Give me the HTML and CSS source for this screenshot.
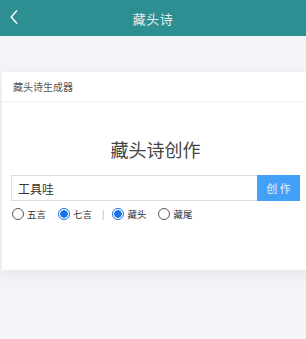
FILE: index.html
```html
<!DOCTYPE html>
<html lang="zh">
<head>
<meta charset="utf-8">
<link rel="stylesheet" href="styles.css">
</head>
<body>
<header class="topbar">
  <svg class="back" width="10" height="16" viewBox="0 0 10 16"><path d="M8 1.5 L2.2 8 L8 14.5" fill="none" stroke="#fff" stroke-width="1.4"/></svg>
  <h1 class="title">藏头诗</h1>
</header>
<main class="page">
  <section class="card">
    <div class="card-head">藏头诗生成器</div>
    <div class="card-body">
      <h2 class="heading">藏头诗创作</h2>
      <div class="form-row">
        <input class="field" type="text" value="工具哇">
        <button class="btn">创 作</button>
      </div>
      <div class="options">
        <label class="opt"><span class="radio"></span>五言</label>
        <label class="opt"><span class="radio on"></span>七言</label>
        <span class="sep">|</span>
        <label class="opt"><span class="radio on"></span>藏头</label>
        <label class="opt"><span class="radio"></span>藏尾</label>
      </div>
    </div>
  </section>
</main>
</body>
</html>
```

FILE: styles.css
```css
* { box-sizing: border-box; }
html, body { margin: 0; padding: 0; }
body {
  width: 306px;
  height: 339px;
  overflow: hidden;
  background: #f3f4f8;
  font-family: "Noto Sans CJK SC", "Noto Sans", sans-serif;
}
.topbar {
  height: 36px;
  background: #2e8f93;
  display: flex;
  align-items: center;
  justify-content: center;
  position: relative;
}
.back {
  position: absolute;
  left: 9px;
  top: 9px;
}
.title {
  margin: 0;
  font-size: 13px;
  font-weight: normal;
  color: rgba(255,255,255,0.88);
  letter-spacing: 0.5px;
}
.page {
  padding-top: 36px;
  padding-left: 2px;
}
.card {
  background: #fff;
  height: 198px;
  width: 310px;
  box-shadow: 0 4px 14px rgba(0,0,0,0.06);
}
.card-head {
  height: 30px;
  padding-left: 11px;
  display: flex;
  align-items: center;
  font-size: 10px;
  color: #555;
  border-bottom: 1px solid #f1f1f1;
}
.card-body {
  padding: 0 6px 0 9px;
  width: 304px;
}
.heading {
  margin: 0;
  padding-top: 35px;
  height: 73px;
  text-align: center;
  font-size: 18px;
  font-weight: normal;
  color: #444;
  line-height: 24px;
}
.form-row {
  display: flex;
  height: 26px;
}
.field {
  flex: 1;
  height: 26px;
  border: 1px solid #ddd;
  border-right: none;
  padding: 0 6px;
  font-family: inherit;
  font-size: 12px;
  color: #333;
  outline: none;
  margin: 0;
}
.btn {
  width: 43px;
  height: 26px;
  border: none;
  background: #42a0f8;
  color: #e8f3ff;
  font-family: inherit;
  font-size: 11px;
  padding: 0;
  margin: 0;
}
.options {
  display: flex;
  align-items: center;
  height: 26px;
  padding-left: 1px;
  font-size: 9.5px;
  color: #333;
}
.opt {
  display: flex;
  align-items: center;
  gap: 3px;
  margin-right: 12px;
}
.sep {
  color: #aaa;
  font-size: 9px;
  margin: 0 8px 0 -2px;
}
.radio {
  width: 12px;
  height: 12px;
  border-radius: 50%;
  border: 1px solid #555;
  display: inline-block;
}
.radio.on {
  border: 1px solid #1a73e8;
  background: radial-gradient(circle, #1a73e8 0 3.5px, #fff 4px);
}
```
